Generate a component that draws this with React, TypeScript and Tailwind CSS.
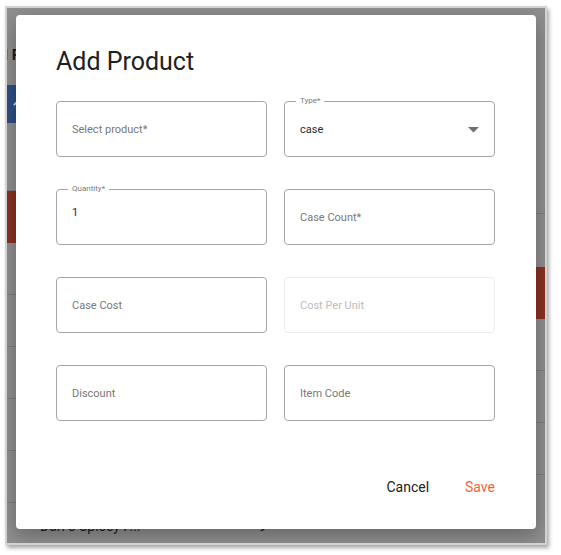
import React from "react";

type FieldProps = {
  label: string;
  value?: string;
  select?: boolean;
  disabled?: boolean;
};

function Field({ label, value, select, disabled }: FieldProps) {
  const filled = value !== undefined;
  return (
    <div
      className={`relative h-[56px] rounded-[4px] border ${
        disabled ? "border-[#ececec]" : "border-[#a6a6a6]"
      }`}
    >
      {filled ? (
        <>
          <span className="absolute -top-[6px] left-[11px] bg-white px-[4px] text-[8px] leading-[10px] text-[#7a7a7a]">
            {label}
          </span>
          <div
            className={`flex items-center pl-[15px] text-[11px] text-[#2b2b2b] ${
              select ? "h-full pt-[2px]" : "h-[46px]"
            }`}
          >
            {value}
          </div>
        </>
      ) : (
        <div
          className={`flex h-full items-center pl-[15px] pt-[3px] text-[11px] ${
            disabled ? "text-[#bcbcbc]" : "text-[#777777]"
          }`}
        >
          {label}
        </div>
      )}
      {select && (
        <svg
          className="absolute right-[15px] top-[25px]"
          width="11"
          height="6"
          viewBox="0 0 11 6"
        >
          <path d="M0 0h11L5.5 5.5z" fill="#6f6f6f" />
        </svg>
      )}
    </div>
  );
}

export default function App() {
  return (
    <div
      className="h-[555px] w-[561px] overflow-hidden bg-white pl-[5px] pt-[6px]"
      style={{ fontFamily: "Roboto, 'Liberation Sans', sans-serif" }}
    >
      {/* screenshot frame */}
      <div className="relative h-[539px] w-[542px] overflow-hidden border-2 border-[#d2d2d2] bg-[#8f8f8f] shadow-[2px_3px_4px_rgba(0,0,0,0.35)]">
        {/* page behind the overlay */}
        <div className="flex h-full">
          <div className="flex w-[300px] flex-col">
            <div className="h-[34px]" />
            <div className="-ml-[26px] h-[26px] whitespace-nowrap text-[15px] font-bold leading-[26px] text-[#1c1c1c]">
              Add Product
            </div>
            <div className="h-[17px]" />
            <div className="relative h-[38px] bg-[#2e4f87]">
              <div className="absolute left-[6px] top-[17px] h-[2px] w-[6px] -rotate-45 bg-[#d8d8d8]" />
            </div>
            <div className="h-[68px] border-b border-[#7d7d7d]" />
            <div className="h-[52px] bg-[#8a3222]" />
            <div className="h-[52px] border-b border-[#7d7d7d]" />
            <div className="h-[52px] border-b border-[#7d7d7d]" />
            <div className="h-[52px] border-b border-[#7d7d7d]" />
            <div className="h-[52px] border-b border-[#7d7d7d]" />
            <div className="h-[52px] border-b border-[#7d7d7d]" />
            <div className="flex items-start gap-[118px] pl-[33px] pt-[13px] text-[14px] leading-[20px] text-[#1c1c1c]">
              <span>Darr's Spicey F...</span>
              <span>9</span>
            </div>
          </div>
          <div className="flex flex-1 flex-col">
            <div className="h-[206px] border-b border-[#7d7d7d]" />
            <div className="h-[53px]" />
            <div className="h-[52px] bg-[#8a3222]" />
            <div className="h-[52px] border-b border-[#7d7d7d]" />
            <div className="h-[52px] border-b border-[#7d7d7d]" />
            <div className="h-[52px] border-b border-[#7d7d7d]" />
          </div>
        </div>

        {/* dialog */}
        <div className="absolute left-[9px] top-[7px] flex h-[514px] w-[520px] flex-col rounded-[4px] bg-white px-[40px] pt-[31px] shadow-[0_6px_20px_rgba(0,0,0,0.3)]">
          <h2 className="text-[25px] leading-[32px] text-[#212121]">
            Add Product
          </h2>
          <div className="mt-[23px] grid grid-cols-2 gap-x-[17px] gap-y-[32px] pr-[1px]">
            <Field label="Select product*" />
            <Field label="Type*" value="case" select />
            <Field label="Quantity*" value="1" />
            <Field label="Case Count*" />
            <Field label="Case Cost" />
            <Field label="Cost Per Unit" disabled />
            <Field label="Discount" />
            <Field label="Item Code" />
          </div>
          <div className="mt-[56px] flex justify-end gap-[36px] pr-[1px] text-[14px]">
            <button className="text-[#212121]">Cancel</button>
            <button className="text-[#f4623a]">Save</button>
          </div>
        </div>
      </div>
    </div>
  );
}
